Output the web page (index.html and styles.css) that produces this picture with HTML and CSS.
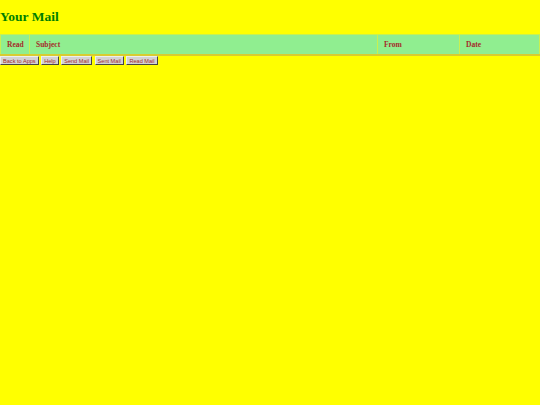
FILE: index.html
```html
<!DOCTYPE html>
<html>
<head>
<meta charset="utf-8">
<link rel="stylesheet" href="styles.css">
</head>
<body>
<h1 class="title">Your Mail</h1>
<table class="mail">
<thead>
<tr>
<th class="c-read">Read</th>
<th class="c-subject">Subject</th>
<th class="c-from">From</th>
<th class="c-date">Date</th>
</tr>
</thead>
</table>
<div class="buttons">
<button class="btn">Back to Apps</button>
<button class="btn">Help</button>
<button class="btn">Send Mail</button>
<button class="btn">Sent Mail</button>
<button class="btn">Read Mail</button>
</div>
</body>
</html>
```
FILE: styles.css
```css
html, body {
  background: #ffff00;
}
body {
  margin: 0;
  font-family: "Liberation Serif", serif;
}
.title {
  margin: 0;
  padding: 9px 0 0 0;
  height: 25px;
  font-size: 13.5px;
  line-height: 16px;
  color: #008000;
  font-weight: bold;
}
.mail {
  width: 100%;
  border-collapse: collapse;
  border-bottom: 2px solid #d8cc30;
}
.mail th {
  background: #90ee90;
  color: #a52a2a;
  font-size: 7.5px;
  font-weight: bold;
  text-align: left;
  height: 19px;
  padding: 0 0 0 6px;
  border: 1px solid #c8f050;
  border-bottom: 0;
}
.c-read { width: 22px; }
.c-subject { width: 341px; }
.c-from { width: 75px; }
.buttons {
  display: flex;
  gap: 2.5px;
  padding: 0;
}
.btn {
  font-family: "Liberation Sans", sans-serif;
  font-size: 5.6px;
  color: #a52a2a;
  background: #d3d3d3;
  border: 1px solid;
  border-color: #eeeeee #444444 #444444 #eeeeee;
  padding: 1px 2px;
  height: 9px;
  line-height: 6px;
  margin: 0;
}
```
